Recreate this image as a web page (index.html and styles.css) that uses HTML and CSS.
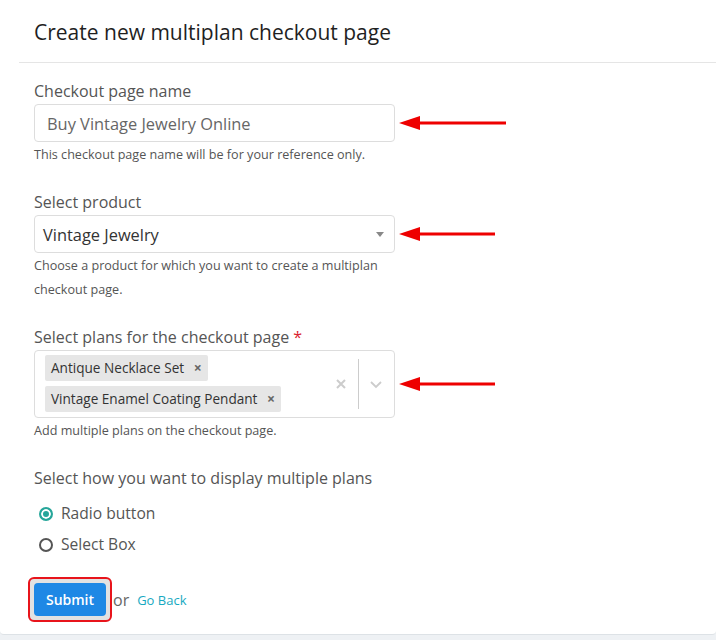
FILE: index.html
```html
<!DOCTYPE html>
<html lang="en">
<head>
  <meta charset="UTF-8" />
  <title>Create new multiplan checkout page</title>
  <link rel="stylesheet" href="styles.css">
</head>
<body>
  <div class="card">
    <div class="card-header">
      <h2>Create new multiplan checkout page</h2>
    </div>

    <form class="card-body">
      <div class="field">
        <label>Checkout page name</label>
        <div class="row">
          <input type="text" class="control" value="Buy Vintage Jewelry Online" />
          <svg class="arrow" width="110" height="16" viewBox="0 0 110 16">
            <path d="M20 8 H108" stroke="#ee0000" stroke-width="3" />
            <path d="M1 8 L22 1 L22 15 Z" fill="#ee0000" />
          </svg>
        </div>
        <p class="help">This checkout page name will be for your reference only.</p>
      </div>

      <div class="field">
        <label>Select product</label>
        <div class="row">
          <div class="control select">
            <span>Vintage Jewelry</span>
            <span class="caret"></span>
          </div>
          <svg class="arrow" width="100" height="16" viewBox="0 0 100 16">
            <path d="M20 8 H97" stroke="#ee0000" stroke-width="3" />
            <path d="M1 8 L22 1 L22 15 Z" fill="#ee0000" />
          </svg>
        </div>
        <p class="help wide">Choose a product for which you want to create a multiplan checkout page.</p>
      </div>

      <div class="field">
        <label>Select plans for the checkout page <span class="req">*</span></label>
        <div class="row">
          <div class="control multi">
            <div class="tags">
              <span class="tag">Antique Necklace Set <b>×</b></span>
              <span class="tag">Vintage Enamel Coating Pendant <b>×</b></span>
            </div>
            <div class="indicators">
              <svg width="14" height="14" viewBox="0 0 14 14"><path d="M3 3 L11 11 M11 3 L3 11" stroke="#cccccc" stroke-width="2" /></svg>
              <span class="sep"></span>
              <svg width="14" height="14" viewBox="0 0 14 14"><path d="M2 5 L7 10 L12 5" fill="none" stroke="#cccccc" stroke-width="1.8" /></svg>
            </div>
          </div>
          <svg class="arrow" width="100" height="16" viewBox="0 0 100 16">
            <path d="M20 8 H97" stroke="#ee0000" stroke-width="3" />
            <path d="M1 8 L22 1 L22 15 Z" fill="#ee0000" />
          </svg>
        </div>
        <p class="help">Add multiple plans on the checkout page.</p>
      </div>

      <div class="field">
        <label>Select how you want to display multiple plans</label>
        <div class="radios">
          <label class="radio"><span class="dot checked"></span> Radio button</label>
          <label class="radio"><span class="dot"></span> Select Box</label>
        </div>
      </div>

      <div class="actions">
        <span class="highlight"><button type="submit">Submit</button></span>
        <span class="or">or</span>
        <a href="#">Go Back</a>
      </div>
    </form>
  </div>
</body>
</html>
```

FILE: styles.css
```css
body {
  margin: 0;
  background: #eef1f4;
  font-family: 'Open Sans', sans-serif;
  color: #555;
}

.card {
  background: white;
  height: 635px;
  border-bottom: 1px solid #dde2e6;
  border-radius: 0 0 4px 4px;
  padding-left: 19px;
  box-sizing: border-box;
}

.card-header {
  padding: 18px 15px 15px;
  border-bottom: 1px solid #e5e5e5;
}

h2 {
  margin: 0;
  font-size: 21px;
  font-weight: 400;
  line-height: 29px;
  color: #1f1f1f;
}

.card-body {
  padding: 18px 15px 0;
}

.field {
  margin-bottom: 25px;
}

.field > label {
  display: block;
  font-size: 16px;
  line-height: 20px;
  margin-bottom: 3px;
}

.req {
  color: #d9232e;
}

.row {
  display: flex;
  align-items: center;
}

.control {
  width: 361px;
  box-sizing: border-box;
  border: 1px solid #ddd;
  border-radius: 4px;
  font-family: inherit;
}

input.control {
  height: 38px;
  padding: 0 12px;
  font-size: 16.4px;
  color: #666;
}

.select {
  height: 38px;
  display: flex;
  align-items: center;
  justify-content: space-between;
  padding: 0 8px;
  font-size: 16.4px;
  color: #333;
}

.caret {
  border-left: 4px solid transparent;
  border-right: 4px solid transparent;
  border-top: 5px solid #888;
  margin-right: 2px;
}

.multi {
  display: flex;
  justify-content: space-between;
  padding: 4px 0 4px 10px;
  height: 68px;
}

.tags {
  display: flex;
  flex-direction: column;
  align-items: flex-start;
  gap: 5px;
}

.tag {
  background: #e6e6e6;
  border-radius: 2px;
  font-size: 13.6px;
  color: #333;
  padding: 0 6px;
  line-height: 26px;
}

.tag b {
  color: #666;
  font-size: 14px;
  margin-left: 6px;
}

.indicators {
  display: flex;
  align-items: center;
  gap: 10px;
  padding-right: 11px;
}

.sep {
  width: 1px;
  align-self: stretch;
  background: #ccc;
  margin: 4px 0;
}

.arrow {
  margin-left: 3px;
}

.help {
  margin: 1px 0 0;
  font-size: 12.6px;
  line-height: 24px;
  color: #555;
}

.help.wide {
  max-width: 361px;
}

.radios {
  padding: 7px 0 0 5px;
}

.radio {
  display: flex;
  align-items: center;
  gap: 8px;
  font-size: 15.6px;
  line-height: 31px;
}

.dot {
  width: 10px;
  height: 10px;
  border: 2px solid #555;
  border-radius: 50%;
  box-sizing: content-box;
}

.dot.checked {
  border-color: #26a69a;
  background: #26a69a;
  box-shadow: inset 0 0 0 2px white;
}

.actions {
  display: flex;
  align-items: center;
  margin-left: -6px;
  margin-top: -8px;
}

.highlight {
  border: 2px solid #e8141b;
  border-radius: 6px;
  padding: 4px;
  background: #e2e2e2;
  display: flex;
}

button {
  background: #1e88e5;
  border: none;
  border-radius: 4px;
  color: white;
  font-family: inherit;
  font-weight: 600;
  font-size: 14px;
  width: 72px;
  height: 33px;
}

.or {
  font-size: 16px;
  color: #666;
  margin-left: 1px;
}

a {
  color: #17a9c1;
  text-decoration: none;
  font-size: 13px;
  margin-left: 8px;
}
```
